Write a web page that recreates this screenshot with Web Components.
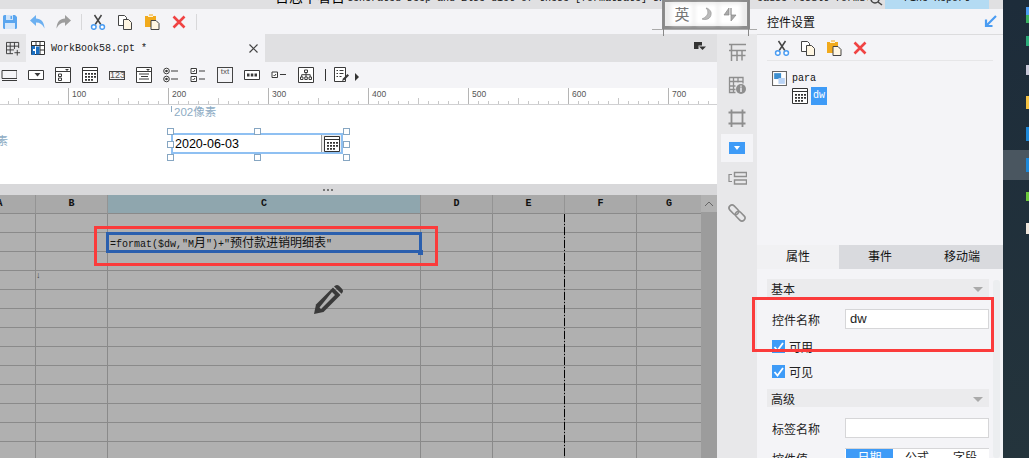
<!DOCTYPE html>
<html lang="zh">
<head>
<meta charset="utf-8">
<title>WorkBook58.cpt</title>
<style>
html,body{margin:0;padding:0;background:#1d2c38;overflow:hidden}
body{font-family:"Liberation Sans","Noto Sans CJK SC",sans-serif}
</style>
</head>
<body>
<app-root></app-root>
<script>
const D='#3a3a3a';
const ICONS={
save:`<path d="M1 2.500A1.500 1.500 0 0 1 2.500 1H13l2 2v10.500a1.500 1.500 0 0 1-1.500 1.500H2.500A1.500 1.500 0 0 1 1 13.500z" fill="#5ba6ef"/><path d="M4 1h7v5H4z" fill="#cfe4fa"/><path d="M8.500 2h1.500v3H8.500z" fill="#5ba6ef"/><path d="M3 9h10v6H3z" fill="#d6e8fb"/>`,
undo:`<path d="M1 6.500 7 1v3.400c5 0 8.300 3.600 8.500 10.100C13.500 10.500 11 8.600 7 8.600V12z" fill="#6cb0f1"/>`,
redo:`<path d="M15 6.500 9 1v3.400C4 4.400.7 8 .5 14.500 2.500 10.500 5 8.600 9 8.600V12z" fill="#9d9d9d"/>`,
cut:`<path d="M4.500 1 10.800 10.500M11.500 1 5.200 10.500" stroke="#444" stroke-width="1.500" fill="none"/><circle cx="3.800" cy="13" r="2.300" fill="#fff" stroke="#4a9cf2" stroke-width="1.500"/><circle cx="12.200" cy="13" r="2.300" fill="#fff" stroke="#4a9cf2" stroke-width="1.500"/>`,
copy:`<path d="M1.500 1.500h6l2 2v8h-8z" fill="#fff" stroke="#444"/><path d="M6.500 5.500h5l3 3v7h-8z" fill="#fff6e2" stroke="#444"/>`,
paste:`<path d="M1 2h4V.5h4V2h3v11H1z" fill="#f1aa1c"/><path d="M4 1.500h5v1.500H4z" fill="#fff3d4"/><path d="M7 6.500h5l3 3v6H7z" fill="#fff6e2" stroke="#444"/>`,
del:`<path d="M2.500 2.500 13.500 13.500M13.500 2.500 2.500 13.500" stroke="#f04343" stroke-width="2.600" fill="none"/>`,
gridplus:`<path d="M.5 1.500h13v6M.5 1.500v12h7M.5 5.500h13M.5 9.500h8M4.500 1.500v12M9 1.500v7" stroke="${D}" fill="none"/><path d="M12 9.500v6M9 12.500h6" stroke="${D}" fill="none"/>`,
book:`<path d="M.5 .5h13v13H.5zM.5 4.500h13M5 .5v4M9 .5v13M9 9h5" stroke="#333" fill="#fff"/><path d="M.5 5h3.500v9H.5z" fill="#1b6fc2"/><path d="M5 5.500h3.500v8H5z" fill="#1b6fc2"/><path d="M2 8h2v2H2z" fill="#fff"/>`,
close:`<path d="M3.500 3.500 11.500 11.500M11.500 3.500 3.500 11.500" stroke="#444" stroke-width="1.200" fill="none"/>`,
dockmenu:`<path d="M0 0h8v3.500H4.500V7H0z" fill="#333"/><path d="M5 4.500h7L8.500 8z" fill="#333"/>`,
wtext:`<path d="M1 3.500h15M1 11.500h15M16 3.500v8M1 13.500h16" stroke="${D}" fill="none"/><path d="M1 3.500v8" stroke="${D}" fill="none"/>`,
wdrop:`<path d="M.5 3.500h15v9H.5z" stroke="${D}" fill="#fff"/><path d="M6.500 6h6L9.500 9.500z" fill="${D}"/>`,
wcombo:`<path d="M.5 .5h15v15H.5zM.5 4.500h15" stroke="${D}" fill="#fff"/><path d="M10 2h4l-2 2z" fill="${D}"/><path d="M3.500 7h3v2.500h-3zM3.500 11h3v2.500h-3z" stroke="${D}" fill="none"/>`,
cal:`<path d="M.5 .5h15v15H.5z" stroke="#333" fill="#fff"/><path d="M.5 3.500h15" stroke="#333"/><path d="M3 6h2v1.800H3zM6 6h2v1.800H6zM9 6h2v1.800H9zM12 6h2v1.800h-2zM3 9h2v1.800H3zM6 9h2v1.800H6zM9 9h2v1.800H9zM12 9h2v1.800h-2zM6 12h2v1.800H6zM9 12h2v1.800H9zM3 12h2v1.800H3z" fill="#333"/>`,
wlist:`<path d="M.5 .5h15v15H.5zM.5 4.500h15" stroke="${D}" fill="#fff"/><path d="M10 2h4l-2 2z" fill="${D}"/><path d="M3 7h10M5 9.500h7M3 12h10" stroke="${D}" fill="none"/>`,
wradio:`<circle cx="3.500" cy="4" r="2.800" fill="#fff" stroke="${D}"/><circle cx="3.500" cy="4" r="1.300" fill="${D}"/><circle cx="3.500" cy="12" r="2.800" fill="#fff" stroke="${D}"/><circle cx="3.500" cy="12" r="1.300" fill="${D}"/><path d="M8 4h7M8 12h7" stroke="${D}" fill="none"/>`,
wcheck:`<path d="M1 1.500h5.500v5H1zM1 9.500h5.500v5H1z" stroke="${D}" fill="#fff"/><path d="M2.500 4 3.500 5l1.500-2M2.500 12l1 1 1.500-2" stroke="${D}" fill="none"/><path d="M9 4h6M9 12h6" stroke="${D}" fill="none"/>`,
wdots:`<path d="M.5 3.500h15v9H.5z" stroke="${D}" fill="#fff"/><path d="M3 6.500h2.500v3H3zM6.800 6.500h2.500v3H6.800zM10.500 6.500H13v3h-2.500z" fill="${D}"/>`,
wbox:`<path d="M1 5h5.500v5.500H1z" stroke="${D}" fill="#fff"/><path d="M2.500 8l1 1 1.500-2" stroke="${D}" fill="none"/><path d="M9 7.500h6" stroke="${D}" fill="none"/>`,
wtree:`<path d="M.5 .5h15v15H.5z" stroke="${D}" fill="#fff"/><path d="M6.500 3h3v2.500h-3zM2.500 10h2.500v2.500H2.500zM6.800 10h2.500v2.500H6.800zM11 10h2.500v2.500H11z" stroke="${D}" fill="none"/><path d="M8 5.500v4.500M3.700 10V7.700h8.500V10" stroke="${D}" fill="none"/>`,
wedit:`<path d="M.5 .5h11v14H.5z" stroke="${D}" fill="#fff"/><path d="M2.500 3.500h1.500M5.500 3.500h4M2.500 6.500h1.500M5.500 6.500h4M2.500 9.500h1.500M5.500 9.500h2" stroke="${D}" fill="none"/><path d="M8 14l1-2.500 4.500-4.500 1.500 1.500-4.500 4.500z" fill="${D}"/>`,
railgrid:`<path d="M1 1.500h17M3.500 1.500V18M1 7.500h17M3.500 12.500h14M9 7.500V18M14 7.500v10" stroke="#8e8e8e" stroke-width="1.500" fill="none"/>`,
railinfo:`<path d="M1 1.500h14v6M1.500 1.500v15h6M1 5.500h14M1.500 10h6M1.500 13.500h6M5.500 1.500v15M10 1.500v5" stroke="#8e8e8e" stroke-width="1.300" fill="none"/><circle cx="13" cy="13" r="5" fill="#8e8e8e"/><path d="M12.200 11.500h1.600v4.500h-1.600zM12.200 9.500h1.600v1.300h-1.600z" fill="#e8e8ea"/>`,
railframe:`<path d="M3.500 .5v18M14.500 .5v18M.5 3.500h17M.5 14.500h17" stroke="#8e8e8e" stroke-width="1.800" fill="none"/>`,
raillayout:`<path d="M6.500 1.500h12v4h-12zM6.500 9h12v4h-12z" stroke="#8e8e8e" stroke-width="1.400" fill="none"/><path d="M4 3.500H1v7h3" stroke="#8e8e8e" stroke-width="1.200" fill="none"/>`,
raillink:`<g transform="rotate(45 9 9)" fill="none" stroke="#8e8e8e" stroke-width="1.600"><rect x="-1" y="6" width="11" height="6" rx="3"/><rect x="8" y="6" width="11" height="6" rx="3"/></g>`,
dock:`<path d="M12 1 3 10M2 4.500V11h6.500" stroke="#4a9cf2" stroke-width="2.200" fill="none"/>`,
para:`<path d="M.5 .5h13v13H.5z" stroke="#666" fill="#fff"/><path d="M2 2h6.500v5.500H2z" fill="#3d8fd0"/><path d="M6 6.500h6v5.500H6z" fill="#b9d3f5"/>`,
pencil:`<path d="M1 30l2-9.500L20 3.500l7.500 7.500L10.500 28z" fill="#3a3a3a"/><path d="M22 1.800a3 3 0 0 1 4 0l3.200 3.200a3 3 0 0 1 0 4L28.500 9.800 21 2.500z" fill="#3a3a3a"/><path d="M19 8l3 3L8 25l-1.500-1.500z" fill="#b0b0b0"/>`,
tick:`<path d="M2.500 7 5.500 10.500 11 3" stroke="#fff" stroke-width="1.800" fill="none"/>`
};
function el(tag,html){
  customElements.define(tag,class extends HTMLElement{
    constructor(){super();this.attachShadow({mode:'open'}).innerHTML=html;}
  });
}
customElements.define('ui-icon',class extends HTMLElement{
  constructor(){super();this.attachShadow({mode:'open'});}
  connectedCallback(){
    const s=+this.getAttribute('size')||16,n=this.getAttribute('name'),v=this.getAttribute('vb')||16;
    this.shadowRoot.innerHTML=`<style>:host{display:block;width:${s}px;height:${s}px;flex:none}svg{display:block}</style><svg width="${s}" height="${s}" viewBox="0 0 ${v} ${v}">${ICONS[n]||''}</svg>`;
  }
});
el('title-strip',`<style>
:host{display:flex;height:9px;background:#e0e0e2;overflow:hidden}
.t{margin-left:275px;height:9px;width:387px;overflow:hidden;white-space:nowrap;flex:none;display:flex;align-items:flex-start}
.c{font:14px/16px "Liberation Sans","Noto Sans CJK SC",sans-serif;color:#000;margin-top:-11px;flex:none}
.m{font:10px/10px "Liberation Mono",monospace;color:#111;margin-top:-6px;margin-left:2px;flex:none}
.t2{margin-left:95px;width:111px;flex:none;overflow:hidden;white-space:nowrap;font:10px/10px "Liberation Mono",monospace;color:#111;margin-top:-6px;height:15px}
.mag{flex:none;width:16px;height:9px;margin-left:1px}
.b{width:104px;background:#b4dbf3;text-align:center;font:10px/10px "Liberation Mono",monospace;color:#111;flex:none;overflow:hidden;height:9px}
.b span{display:block;margin-top:-6px}
</style><div class="t"><span class="c">日志中看日</span><span class="m">Generated Deep and Else dict of these [formatDate] should and</span></div><div class="t2">cause result formula</div><svg class="mag" viewBox="0 0 16 9"><circle cx="6" cy="-1" r="4" fill="none" stroke="#444" stroke-width="1.500"/><path d="M9 2l4 3" stroke="#444" stroke-width="1.500"/></svg><div class="b"><span>Fine Report</span></div>`);
el('main-toolbar',`<style>
:host{display:flex;align-items:center;height:25px;background:#f4f4f7;padding-left:2px;box-sizing:border-box}
ui-icon{margin-right:11px}
i{width:1px;height:16px;background:#d8d8da;margin:0 8px 0 -2px;display:block}
</style>
<ui-icon name="save"></ui-icon><ui-icon name="undo"></ui-icon><ui-icon name="redo"></ui-icon><i></i>
<ui-icon name="cut"></ui-icon><ui-icon name="copy"></ui-icon><ui-icon name="paste"></ui-icon><ui-icon name="del"></ui-icon><i></i>`);
el('tab-bar',`<style>
:host{display:flex;height:28px;background:#e0e0e2;align-items:stretch}
.add{width:26px;background:#e6e6e8;display:flex;align-items:center;justify-content:center}
.tab{width:239px;background:#f4f4f7;display:flex;align-items:center;padding-left:5px;box-sizing:border-box}
.name{font:10px "Liberation Mono",monospace;color:#222;margin-left:6px;flex:1}
.x{margin-right:4px}
.r{margin-left:auto;margin-right:11px;align-self:center}
</style>
<div class="add"><ui-icon name="gridplus" size="15"></ui-icon></div>
<div class="tab"><ui-icon name="book" size="14" vb="14"></ui-icon><span class="name">WorkBook58.cpt *</span><ui-icon class="x" name="close" size="15" vb="15"></ui-icon></div>
<ui-icon class="r" name="dockmenu" size="12" vb="12"></ui-icon>`);
el('widget-bar',`<style>
:host{display:flex;align-items:center;height:26px;background:#f4f4f7;padding-left:1px;box-sizing:border-box}
ui-icon{margin-right:11px}
.n{width:16px;height:9px;border:1px solid #444;box-sizing:border-box;margin-right:11px;font:9px/7px "Liberation Sans",sans-serif;color:#555;text-align:center;flex:none}
.txt{width:16px;height:16px;border:1px solid #444;box-sizing:border-box;margin-right:11px;font:8px/7px "Liberation Sans",sans-serif;color:#555;text-align:center;flex:none}
i{width:1px;height:12px;background:#333;margin:0 8px 0 0;display:block}
b{display:block;width:0;height:0;border-left:4px solid #333;border-top:4px solid transparent;border-bottom:4px solid transparent;margin:3px 0 0 -6px}
</style>
<ui-icon name="wtext"></ui-icon><ui-icon name="wdrop"></ui-icon><ui-icon name="wcombo"></ui-icon><ui-icon name="cal"></ui-icon>
<span class="n">123</span><ui-icon name="wlist"></ui-icon><ui-icon name="wradio"></ui-icon><ui-icon name="wcheck"></ui-icon>
<span class="txt">txt</span><ui-icon name="wdots"></ui-icon><ui-icon name="wbox"></ui-icon><ui-icon name="wtree"></ui-icon>
<i></i><ui-icon name="wedit"></ui-icon><b></b>`);
el('design-ruler',`<style>
:host{display:flex;height:17px;background:#fff;border-bottom:1px solid #d0d0d2;box-sizing:border-box;overflow:hidden}
.s{flex:none;width:100px;height:16px;box-sizing:border-box;border-left:1px solid #b5b5b5;padding-left:3px;font:8.500px/12px "Liberation Sans",sans-serif;color:#555;
background:repeating-linear-gradient(to right,transparent 0 9px,#c8c8c8 9px 10px) left bottom/100% 3px no-repeat,linear-gradient(#c8c8c8,#c8c8c8) 49px bottom/1px 6px no-repeat}
.first{margin-left:-32px}
</style>
<div class="s first"></div><div class="s">100</div><div class="s">200</div><div class="s">300</div><div class="s">400</div><div class="s">500</div><div class="s">600</div><div class="s">700</div>`);
el('design-canvas',`<style>
:host{display:block;height:79px;background:#fff;position:relative;overflow:hidden;font-family:"Liberation Sans","Noto Sans CJK SC",sans-serif}
.lab{position:absolute;color:#8eacc4;font-size:11.500px;line-height:14px;white-space:nowrap}
.tick{position:absolute;left:171px;top:1px;width:1px;height:6px;background:#8eacc4}
.w{position:absolute;left:171px;top:28px;width:172px;height:21px;border:2px solid #8fc0f2;box-sizing:border-box;background:#fff;display:flex;align-items:center}
.v{flex:1;font-size:12.500px;padding-left:2px;color:#000;line-height:16px}
.btn{width:20px;height:17px;background:#eee;border-left:1px solid #999;display:flex;align-items:center;justify-content:center;box-sizing:border-box}
.h{position:absolute;width:5px;height:5px;background:#fff;border:1px solid #86a6c2}
</style>
<span class="lab" style="left:174px;top:0">202像素</span><span class="tick"></span>
<span class="lab" style="left:-15px;top:29px;">像素</span>
<div class="w"><span class="v">2020-06-03</span><span class="btn"><ui-icon name="cal" size="16"></ui-icon></span></div>
<span class="h" style="left:167px;top:23px"></span><span class="h" style="left:254px;top:23px"></span><span class="h" style="left:343px;top:23px"></span>
<span class="h" style="left:167px;top:36px"></span><span class="h" style="left:343px;top:36px"></span>
<span class="h" style="left:167px;top:49px"></span><span class="h" style="left:254px;top:49px"></span><span class="h" style="left:343px;top:49px"></span>`);
el('pane-splitter',`<style>
:host{display:flex;height:11px;background:#d8d8da;padding-left:323px;box-sizing:border-box;gap:2px;padding-top:5px}
i{display:block;width:2px;height:2px;background:#777}
</style><i></i><i></i><i></i>`);
customElements.define('sheet-view',class extends HTMLElement{
  constructor(){super();
    const cols=[['A',72],['B',72],['C',313],['D',72],['E',72],['F',72],['G',65]];
    const head=cols.map(([n,w])=>`<div class="c h${n==='C'?' sel':''}" style="width:${w}px">${n}</div>`).join('');
    let rows='';
    for(let r=0;r<13;r++){
      rows+='<div class="r">'+cols.map(([n,w])=>{
        const t=(r===1&&n==='C')?`<span class="f">=format($dw,"M<span class="z">月</span>")+"<span class="z">预付款进销明细表</span>"</span>`:'';
        return `<div class="c" style="width:${w}px">${t}</div>`;}).join('')+'</div>';
    }
    this.attachShadow({mode:'open'}).innerHTML=`<style>
:host{display:block;height:263px;position:relative;overflow:hidden;background:#b0b0b0}
.g{position:absolute;left:-36px;top:0;}
.r,.hr{display:flex;height:19px}
.c{flex:none;box-sizing:border-box;height:19px;border-right:1px solid #8a8a8a;border-bottom:1px solid #8a8a8a;white-space:nowrap;overflow:visible}
.h{background:#a9a9a9;text-align:center;font:bold 10px/18px "Liberation Mono",monospace;color:#111;border-right-color:#949494;border-bottom-color:#8a8a8a}
.h.sel{background:#8fa6ae}
.f{font:10px/18px "Liberation Mono","Noto Sans CJK SC",monospace;color:#111;padding-left:2px;display:block}
.z{font:12px/18px "Noto Sans CJK SC",sans-serif}
.sb{position:absolute;left:701px;top:0;width:16px;height:263px;background:#9c9c9c}
.up{height:17px;background:#b2b2b2;display:flex;align-items:center;justify-content:center}
.sel-box{position:absolute;left:106px;top:37px;width:316px;height:21px;box-sizing:border-box;border:3px solid #2a5fae}
.grip{position:absolute;left:418px;top:55px;width:5px;height:5px;background:#2a5fae}
.red{position:absolute;left:94px;top:31px;width:344px;height:40px;box-sizing:border-box;border:3px solid #fb3b3b}
.dash{position:absolute;left:564px;top:19px;width:1px;height:244px;background:repeating-linear-gradient(#000 0 8px,transparent 8px 10px,#000 10px 11px,transparent 11px 13px)}
.pen{position:absolute;left:313px;top:89px}
.ar{position:absolute;left:36px;top:76px;color:#444;font:9px/8px "Liberation Sans","DejaVu Sans",sans-serif}
</style>
<div class="g"><div class="hr">${head}</div>${rows}</div>
<div class="sb"><div class="up"><svg width="10" height="6" viewBox="0 0 10 6"><path d="M1 5 5 1l4 4" stroke="#666" fill="none"/></svg></div></div>
<div class="dash"></div><div class="sel-box"></div><div class="grip"></div><div class="red"></div>
<span class="ar">↓</span><ui-icon class="pen" name="pencil" size="31" vb="31"></ui-icon>`;
  }
});
el('icon-rail',`<style>
:host{display:flex;flex-direction:column;align-items:center;width:40px;background:#e8e8ea;box-sizing:border-box;padding-top:9px}
ui-icon{margin-bottom:14px}
.a{width:32px;height:28px;background:#f4f4f7;display:flex;align-items:center;justify-content:center;margin-bottom:9px}
.a span{width:16px;height:12px;background:#3e9bf7;display:flex;align-items:center;justify-content:center}
.a b{display:block;border-left:3px solid transparent;border-right:3px solid transparent;border-top:4px solid #fff}
</style>
<ui-icon name="railgrid" size="19" vb="19"></ui-icon>
<ui-icon name="railinfo" size="19" vb="19"></ui-icon>
<ui-icon name="railframe" size="18" vb="18" style="margin-bottom:7px"></ui-icon>
<div class="a"><span><b></b></span></div>
<ui-icon name="raillayout" size="19" vb="19" style="margin-bottom:14px"></ui-icon>
<ui-icon name="raillink" size="18" vb="18"></ui-icon>`);
el('prop-head',`<style>
:host{display:flex;align-items:center;height:18px;background:#ebebed;font-size:12px;color:#222;padding:0 4px;justify-content:space-between;box-sizing:border-box}
b{display:block;border-left:5px solid transparent;border-right:5px solid transparent;border-top:5px solid #aaa;margin:3px 2px 0 0}
</style><slot></slot><b></b>`);
el('prop-row',`<style>
:host{display:flex;align-items:center;height:20px;font-size:12px;color:#222;padding-left:5px}
label{width:73px;flex:none;white-space:nowrap}
.i{width:144px;height:20px;box-sizing:border-box;background:#fff;border:1px solid #d6d6d8;font:13px/18px "Liberation Sans",sans-serif;padding-left:4px;color:#222}
</style><label><slot name="k"></slot></label><div class="i"><slot></slot></div>`);
el('prop-check',`<style>
:host{display:flex;align-items:center;height:13px;font-size:12px;color:#222;padding-left:5px;gap:4px}
.b{width:13px;height:13px;background:#3e9bf7;flex:none}
</style><span class="b"><ui-icon name="tick" size="13" vb="13"></ui-icon></span><slot></slot>`);
el('side-panel',`<style>
:host{display:block;width:246px;height:449px;background:#f4f4f7;position:relative;color:#111;font-family:"Liberation Sans","Noto Sans CJK SC",sans-serif}
.t{height:26px;box-sizing:border-box;border-bottom:1px solid #dcdcde;display:flex;align-items:center;justify-content:space-between;padding:0 5px 0 10px;font-size:12px}
.tb{display:flex;align-items:center;height:26px;margin:0 10px;padding-left:7px;border-bottom:1px solid #e6e6e8;box-sizing:border-box;gap:10px}
.tree{height:184px;box-sizing:border-box;padding:10px 0 0 15px}
.row{display:flex;align-items:center;gap:5px;font:10px/14px "Liberation Mono",monospace;height:15px;color:#111}
.row2{display:flex;align-items:center;gap:3px;margin:1px 0 0 20px;font:10px/18px "Liberation Mono",monospace;height:18px}
.dw{background:#3e9bf7;color:#fff;width:16px;height:18px;text-align:center}
.tabs{display:flex;height:24px;font-size:12px;background:#d9dade}
.tabs div{flex:1;text-align:center;line-height:24px}
.tabs .on{background:#f1f1f3;flex:none;width:82px}
.body{padding:10px 14px 0 10px}
.seg{display:flex;align-items:center;padding-left:5px;font-size:12px;height:20px;color:#222}
.seg label{width:73px;flex:none}
.sg{display:flex;width:144px;height:20px;background:#fff;border-top:1px solid #d6d6d8;box-sizing:border-box;line-height:19px;text-align:center}
.sg span{flex:1}.sg .on{background:#3e9bf7;color:#fff;flex:none;width:47px;margin-left:1px}
.red{position:absolute;left:-5px;top:288px;width:242px;height:55px;box-sizing:border-box;border:3px solid #fb3b3b}
.scroll{position:absolute;right:3px;top:271px;width:7px;height:178px;background:#eceef0;border-radius:3px}
</style>
<div class="t"><span>控件设置</span><ui-icon name="dock" size="14" vb="14"></ui-icon></div>
<div class="tb"><ui-icon name="cut"></ui-icon><ui-icon name="copy"></ui-icon><ui-icon name="paste"></ui-icon><ui-icon name="del"></ui-icon></div>
<div class="tree"><div class="row"><ui-icon name="para" size="15" vb="14"></ui-icon><span>para</span></div>
<div class="row2"><ui-icon name="cal" size="16"></ui-icon><span class="dw">dw</span></div></div>
<div class="tabs"><div class="on">属性</div><div>事件</div><div>移动端</div></div>
<div class="scroll"></div>
<div class="body">
<prop-head>基本</prop-head>
<div style="height:12px"></div>
<prop-row><span slot="k">控件名称</span>dw</prop-row>
<div style="height:11px"></div>
<prop-check>可用</prop-check>
<div style="height:12px"></div>
<prop-check>可见</prop-check>
<div style="height:11px"></div>
<prop-head>高级</prop-head>
<div style="height:11px"></div>
<prop-row><span slot="k">标签名称</span></prop-row>
<div style="height:10px"></div>
<div class="seg"><label>控件值</label><div class="sg"><span class="on">日期</span><span>公式</span><span>字段</span></div></div>
</div>
<div class="red"></div>`);
el('task-strip',`<style>
:host{display:flex;flex-direction:column;align-items:flex-end;width:26px;height:458px;background:linear-gradient(#1d2c3a,#24343c);box-sizing:border-box}
i{display:block;width:3px;flex:none}
.band{width:26px;height:30px;background:#4a5660;display:flex;justify-content:flex-end;align-items:center;flex:none}
</style>
<i style="height:7px;background:none"></i><i style="height:8px;background:#4a9cf2"></i><i style="height:8px;background:#38b060"></i>
<i style="height:13px;background:none"></i><i style="height:10px;background:#2bab78"></i>
<i style="height:19px;background:none"></i><i style="height:10px;background:#c8c8d8"></i>
<i style="height:21px;background:none"></i><i style="height:13px;background:#f6c344"></i>
<i style="height:18px;background:none"></i><i style="height:14px;background:#1e88d8"></i>
<i style="height:9px;background:none"></i><div class="band"><i style="height:14px;background:#1e88d8"></i></div>
<i style="height:12px;background:none"></i><i style="height:9px;background:#6cc83c"></i>
<i style="height:22px;background:none"></i><i style="height:11px;background:#efe6dc"></i>`);
el('ime-bar',`<style>
:host{position:absolute;left:652px;top:0;width:105px;height:36px;display:block;pointer-events:none}
.b{position:absolute;left:10px;top:0;width:88px;height:29px;box-sizing:border-box;border:3px solid #8c8c8c;border-top-width:2px;background:#ececec;display:flex;align-items:center;justify-content:space-between;padding:0 9px 0 9px;color:#777;font:15px/18px "Noto Sans CJK SC",sans-serif}
.h{position:absolute;left:0;top:29px;width:105px;height:1px;background:#aaa}
.v{position:absolute;top:0;width:1px;height:36px;background:#888}
.g{background:#fff;box-shadow:0 0 4px 3px #fff;width:16px;height:15px;display:flex;align-items:center;justify-content:center}
</style>
<div class="b"><span class="g">英</span><span class="g"><svg width="14" height="15" viewBox="0 0 14 15"><path d="M7 1c3 3 3 8-4 11 6 2 10-2 9-7-1-2-3-4-5-4z" fill="#bbb" stroke="#999" stroke-width=".7"/></svg></span><span class="g"><svg width="16" height="15" viewBox="0 0 16 15"><path d="M7 1 2 8h5zM9 1v13l5-6H9z" fill="#aaa" stroke="#888" stroke-width=".7"/></svg></span></div>
<i class="h"></i><i class="v" style="left:11px"></i><i class="v" style="left:96px"></i>`);
el('app-root',`<style>
:host{display:flex;width:1029px;height:458px;overflow:hidden;position:relative;font-family:"Liberation Sans","Noto Sans CJK SC",sans-serif}
.main{width:1003px;flex:none;display:flex;flex-direction:column}
.work{display:flex;flex:1;min-height:0}
.left{width:757px;flex:none;display:flex;flex-direction:column}
.body{flex:1;display:flex;min-height:0}
.design{width:717px;flex:none;display:flex;flex-direction:column;background:#f4f4f7}
</style>
<div class="main"><title-strip></title-strip>
<div class="work"><div class="left"><main-toolbar></main-toolbar>
<div class="body"><div class="design"><tab-bar></tab-bar><widget-bar></widget-bar><design-ruler></design-ruler><design-canvas></design-canvas><pane-splitter></pane-splitter><sheet-view></sheet-view></div><icon-rail></icon-rail></div></div>
<side-panel></side-panel></div></div>
<task-strip></task-strip><ime-bar></ime-bar>`);
</script>
</body>
</html>
